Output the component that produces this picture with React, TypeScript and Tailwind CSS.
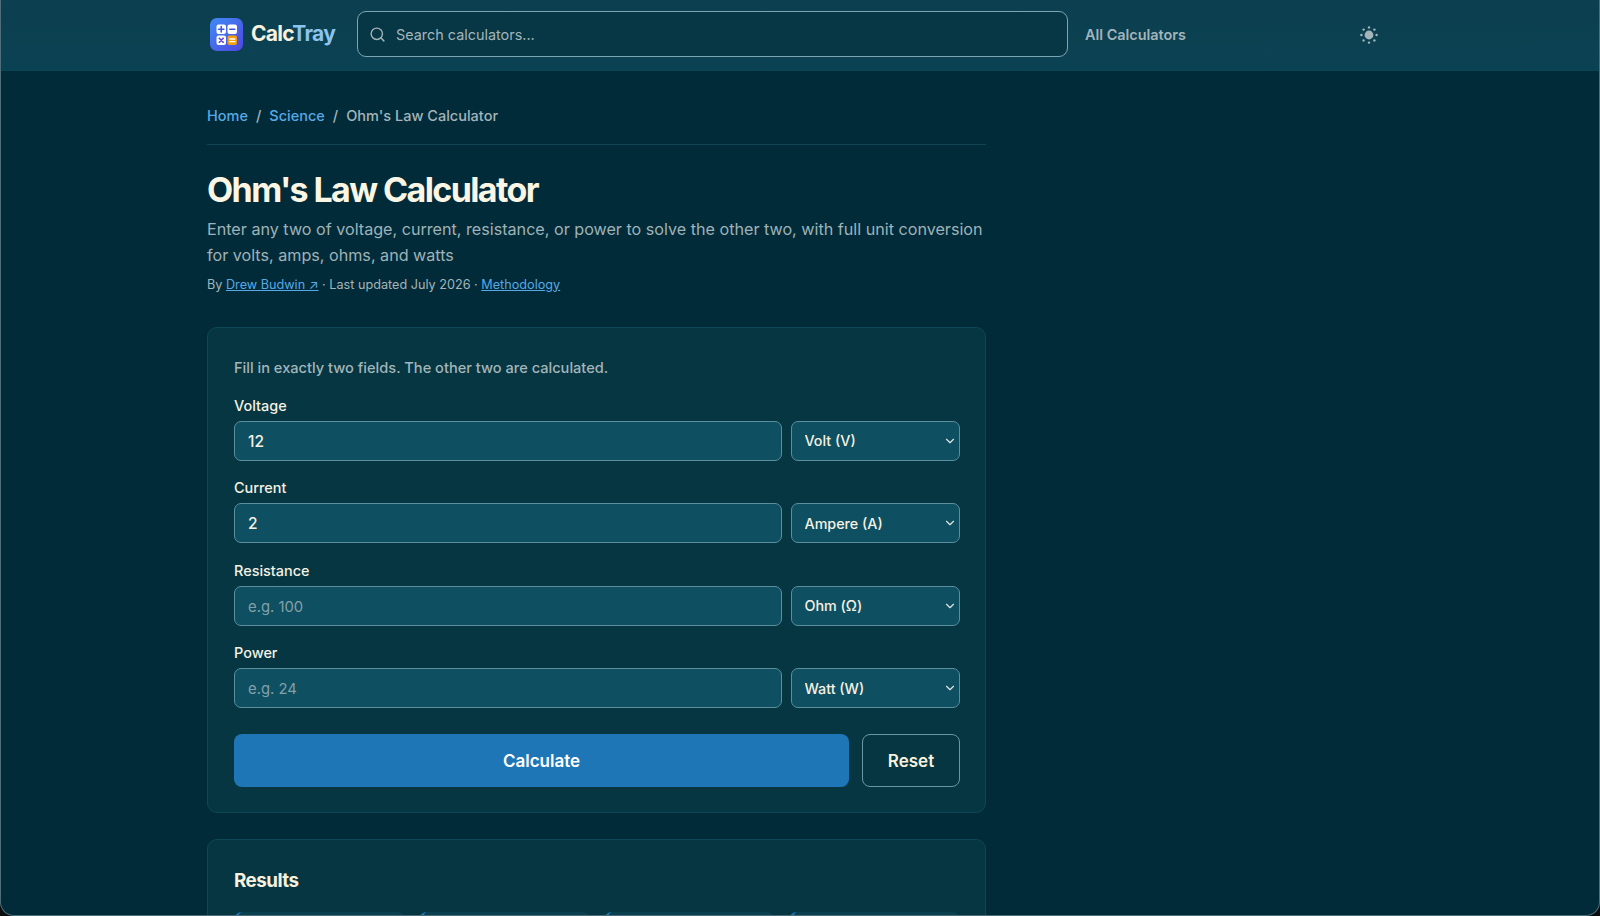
import { Search, ChevronDown } from "lucide-react";

const sans = "font-['Inter','Liberation_Sans',sans-serif]";

function Logo() {
  return (
    <svg width="33" height="33" viewBox="0 0 33 33" className="shrink-0">
      <defs>
        <linearGradient id="lg" x1="0" y1="0" x2="1" y2="1">
          <stop offset="0" stopColor="#3f8cf5" />
          <stop offset="1" stopColor="#4f46e0" />
        </linearGradient>
      </defs>
      <rect width="33" height="33" rx="7" fill="url(#lg)" />
      <rect x="6.5" y="6.5" width="9.5" height="9.5" rx="2" fill="#fff" />
      <rect x="17.5" y="6.5" width="9.5" height="9.5" rx="2" fill="#fff" />
      <rect x="6.5" y="17.5" width="9.5" height="9.5" rx="2" fill="#fff" />
      <rect x="17.5" y="17.5" width="9.5" height="9.5" rx="2" fill="#f59e0b" />
      <path d="M11.25 8.6v5.3M8.6 11.25h5.3" stroke="#3f55e0" strokeWidth="1.6" strokeLinecap="round" />
      <path d="M19.8 11.25h5" stroke="#3f55e0" strokeWidth="1.6" strokeLinecap="round" />
      <path d="M9.3 20.3l3.9 3.9M13.2 20.3l-3.9 3.9" stroke="#5a3fd8" strokeWidth="1.6" strokeLinecap="round" />
      <path d="M19.8 21h5M19.8 23.7h5" stroke="#fff" strokeWidth="1.3" strokeLinecap="round" />
    </svg>
  );
}

function SunIcon() {
  return (
    <svg width="18" height="18" viewBox="0 0 18 18" fill="#a3b5ba">
      <circle cx="9" cy="9" r="4.4" />
      <circle cx="9" cy="1.4" r="1.2" />
      <circle cx="9" cy="16.6" r="1.2" />
      <circle cx="1.4" cy="9" r="1.2" />
      <circle cx="16.6" cy="9" r="1.2" />
      <circle cx="3.6" cy="3.6" r="1.2" />
      <circle cx="14.4" cy="3.6" r="1.2" />
      <circle cx="3.6" cy="14.4" r="1.2" />
      <circle cx="14.4" cy="14.4" r="1.2" />
    </svg>
  );
}

function Field({ label, value, placeholder, unit }: { label: string; value?: string; placeholder?: string; unit: string }) {
  return (
    <div className="flex flex-col">
      <label className="h-[20px] mb-[5px] text-[14.45px] leading-[20px] font-medium text-[#f5f1e3]">{label}</label>
      <div className="flex gap-[9px]">
        <input
          defaultValue={value}
          placeholder={placeholder}
          className="h-10 w-[548px] rounded-[7px] border border-[#5b8f9e] bg-[#0e4f61] px-[13px] pt-[1px] text-[15.5px] font-medium text-[#f5f1e3] placeholder:text-[#83a0a8] placeholder:font-normal placeholder:text-[14.8px] outline-none"
        />
        <div className="relative w-[169px]">
          <select className="h-10 w-full appearance-none rounded-[7px] border border-[#5b8f9e] bg-[#0e4f61] pl-[12.5px] pr-[13px] pt-[1px] text-[14.3px] font-medium text-[#f5f1e3] outline-none">
            <option>{unit}</option>
          </select>
          <ChevronDown className="pointer-events-none absolute right-[3px] top-[13px] text-[#dfe6e4]" size={14} strokeWidth={2} />
        </div>
      </div>
    </div>
  );
}

export default function App() {
  return (
    <div className={`h-[916px] w-[1600px] overflow-hidden bg-[#0b0d0e] ${sans}`}>
      <div className="h-[916px] overflow-hidden rounded-b-[14px] border-x border-b border-[#4d6f79] bg-[#022b39]">
        <header className="h-[71px] border-b-2 border-[#0a4452] bg-gradient-to-b from-[#0c3f50] to-[#0b4253]">
          <div className="mx-auto flex h-full w-[1200px] items-center pb-[1px] pl-[10px]">
            <Logo />
            <span className="ml-[8px] w-[106px] text-[21px] font-bold tracking-[-0.7px] text-[#f7f1de]">
              Calc<span className="text-[#8cc4ee]">Tray</span>
            </span>
            <div className="flex h-[46px] w-[711px] items-center rounded-[9px] border border-[#7ba6b3] bg-[#073644] pl-[11px]">
              <Search size={17} strokeWidth={2} className="text-[#a3b5ba]" />
              <input
                placeholder="Search calculators..."
                className="ml-[10px] flex-1 bg-transparent pt-[1px] text-[14.4px] text-[#d5dcdc] placeholder:text-[#a3b5ba] outline-none"
              />
            </div>
            <a className="ml-[17px] mt-[2px] text-[14.4px] font-semibold text-[#a3b5ba]">All Calculators</a>
            <button className="ml-[163px] mt-[2px] flex h-10 w-10 items-center justify-center">
              <SunIcon />
            </button>
          </div>
        </header>
        <main className="ml-[206px] w-[779px] pt-[35px]">
          <nav className="flex h-5 items-center text-[14.5px] font-medium text-[#a3b5ba]">
            <a className="text-[#57a9e6]">Home</a>
            <span className="mx-[8px]">/</span>
            <a className="text-[#57a9e6]">Science</a>
            <span className="mx-[8px]">/</span>
            <span>Ohm's Law Calculator</span>
          </nav>
          <div className="mt-[18px] h-px bg-[#124554]" />
          <h1 className="mt-[24px] text-[34px] leading-[42px] font-bold tracking-[-1.6px] text-[#fbf5e4]">Ohm's Law Calculator</h1>
          <p className="mt-[6px] text-[16.15px] leading-[25.5px] text-[#9fb2b7]">
            Enter any two of voltage, current, resistance, or power to solve the other two, with full unit conversion for volts, amps, ohms, and watts
          </p>
          <p className="mt-[6.5px] text-[12.66px] leading-5 text-[#a3b5ba]">
            By <a className="text-[#57a9e6] underline">Drew Budwin ↗</a> · Last updated July 2026 · <a className="text-[#57a9e6] underline">Methodology</a>
          </p>
          <section className="mt-[32px] h-[486px] rounded-[10px] border border-[#0e4856] bg-[#053642] pt-[25px] pr-[25px] pl-[26px]">
            <p className="mt-[5px] h-5 text-[14.6px] leading-5 font-medium text-[#a3b5ba]">Fill in exactly two fields. The other two are calculated.</p>
            <div className="mt-[18px] flex flex-col gap-[17.6px]">
              <Field label="Voltage" value="12" unit="Volt (V)" />
              <Field label="Current" value="2" unit="Ampere (A)" />
              <Field label="Resistance" placeholder="e.g. 100" unit="Ohm (Ω)" />
              <Field label="Power" placeholder="e.g. 24" unit="Watt (W)" />
            </div>
            <div className="mt-[26px] flex gap-[13px]">
              <button className="h-[53px] w-[615px] rounded-[8px] bg-[#1f76b7] pt-[1px] text-[17px] font-semibold text-white">Calculate</button>
              <button className="h-[53px] w-[98px] rounded-[8px] border border-[#6a96a2] pt-[1px] text-[17px] font-semibold text-[#f7f1de]">Reset</button>
            </div>
          </section>
          <section className="mt-[26px] h-[200px] rounded-[10px] border border-[#0e4856] bg-[#053642] pt-[25px] pr-[25px] pl-[26px]">
            <h2 className="mt-[2px] text-[18.8px] leading-[28px] font-bold tracking-[-0.5px] text-[#f7f1de]">Results</h2>
            <div className="mt-[17px] grid grid-cols-4 gap-[14px]">
              <div className="h-20 rounded-[8px] border-l-4 border-[#1f76b7] bg-[#0b4050]" />
              <div className="h-20 rounded-[8px] border-l-4 border-[#1f76b7] bg-[#0b4050]" />
              <div className="h-20 rounded-[8px] border-l-4 border-[#1f76b7] bg-[#0b4050]" />
              <div className="h-20 rounded-[8px] border-l-4 border-[#1f76b7] bg-[#0b4050]" />
            </div>
          </section>
        </main>
      </div>
    </div>
  );
}
